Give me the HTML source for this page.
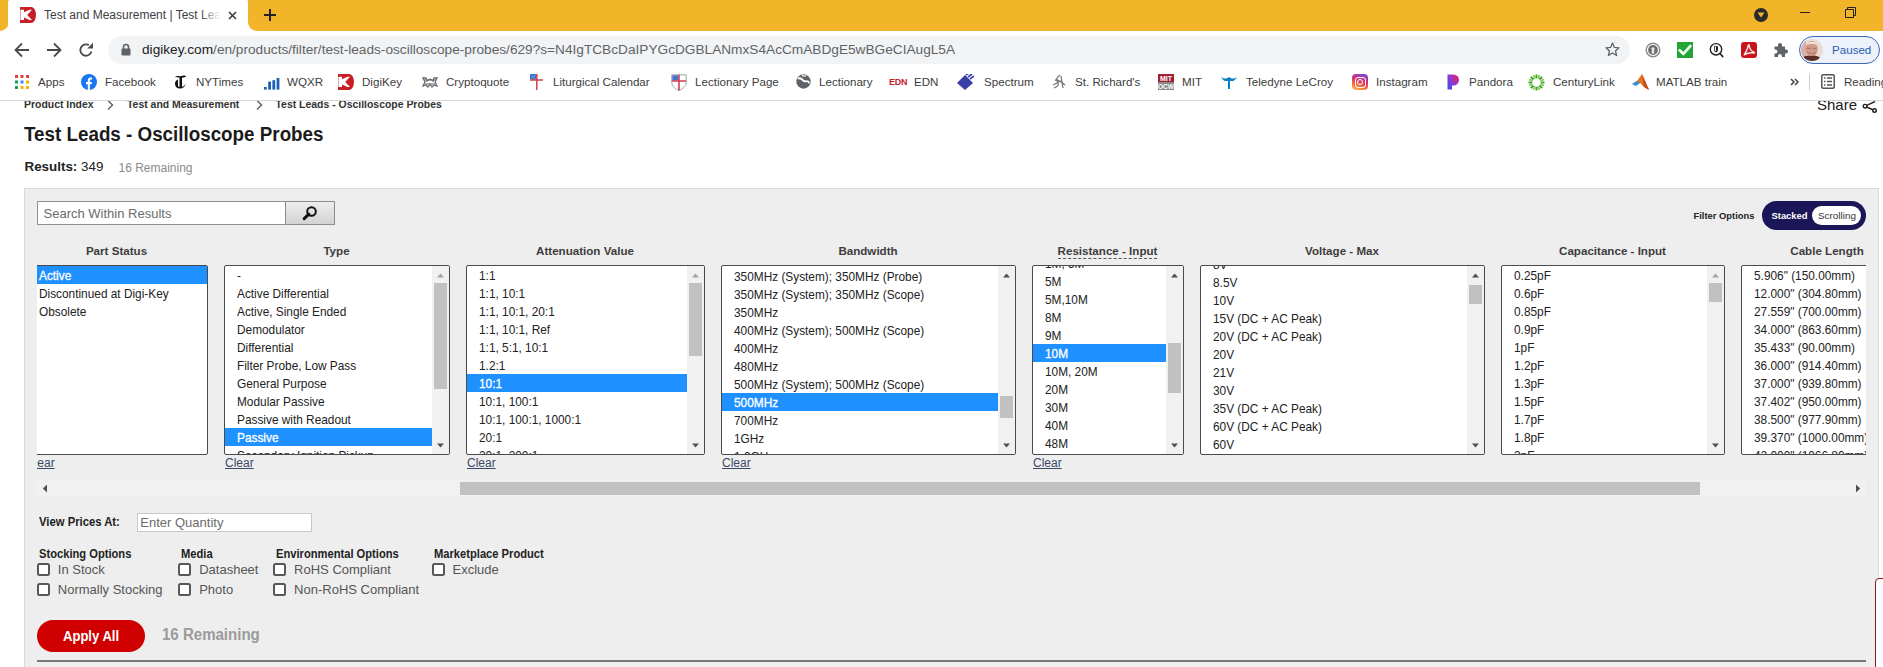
<!DOCTYPE html>
<html><head><meta charset="utf-8">
<style>
*{margin:0;padding:0;box-sizing:border-box}
html,body{width:1883px;height:667px;overflow:hidden;background:#fff;font-family:"Liberation Sans",sans-serif;position:relative}
.a{position:absolute}
.t{position:absolute;white-space:nowrap;line-height:1}
#tabbar{left:0;top:0;width:1883px;height:31px;background:#F2B52A}
#toolbar{left:0;top:31px;width:1883px;height:35px;background:#fff}
#bm{left:0;top:66px;width:1883px;height:34px;background:#fff}
#sep{left:0;top:100px;width:1883px;height:1px;background:#d6d6d6}
.bmt{font-size:11.6px;color:#3c3c3c;top:76px}
#page{left:0;top:101px;width:1883px;height:566px;overflow:hidden;background:#fff}
</style></head><body>
<!-- TAB BAR -->
<div id="tabbar" class="a"></div>
<div class="a" style="left:0;top:22px;width:258px;height:9px;background:#fff"></div>
<div class="a" style="left:0;top:0;width:9px;height:31px;background:#F2B52A;border-bottom-right-radius:9px"></div>
<div class="a" style="left:8px;top:0;width:241px;height:31px;background:#fff;border-top-left-radius:2px;border-top-right-radius:3px"></div>
<div class="a" style="left:248px;top:0;width:10px;height:31px;background:#F2B52A;border-bottom-left-radius:9px"></div>
<!-- favicon K -->
<svg class="a" style="left:20px;top:7px" width="16" height="16" viewBox="0 0 16 16"><path d="M0 0H11A5 8 0 0 1 11 16H0Z" fill="#C81E28"/><path d="M0.4 2.8H4V5.2L9.4 2.8H12L7.2 7.9L12 13H9.4L4 10.6V13H0.4Z" fill="#fff"/></svg>
<div class="t" style="left:44px;top:9px;font-size:12px;color:#3c4043;width:178px;overflow:hidden;height:14px">Test and Measurement | Test Leads - Oscilloscope Probes</div>
<div class="a" style="left:200px;top:6px;width:24px;height:18px;background:linear-gradient(to right,rgba(255,255,255,0),#fff 85%)"></div>
<svg class="a" style="left:228px;top:11px" width="9" height="9" viewBox="0 0 9 9"><path d="M1 1L8 8M8 1L1 8" stroke="#3c3c3c" stroke-width="1.6"/></svg>
<svg class="a" style="left:263px;top:8px" width="14" height="14" viewBox="0 0 14 14"><path d="M7 1V13M1 7H13" stroke="#222" stroke-width="2"/></svg>
<!-- window controls -->
<div class="a" style="left:1754px;top:8px;width:14px;height:14px;border-radius:50%;background:#2a2a2a"></div>
<svg class="a" style="left:1757px;top:12px" width="8" height="6" viewBox="0 0 8 6"><path d="M0.5 0.5H7.5L4 5.5Z" fill="#F2B52A"/></svg>
<div class="a" style="left:1800px;top:12px;width:10px;height:1px;background:#222"></div>
<svg class="a" style="left:1845px;top:7px" width="11" height="11" viewBox="0 0 11 11"><path d="M0.5 2.5H8.5V10.5H0.5Z M2.5 2.5V0.5H10.5V8.5H8.5" fill="none" stroke="#222" stroke-width="1"/></svg>

<!-- TOOLBAR -->
<div id="toolbar" class="a"></div>
<svg class="a" style="left:14px;top:42px" width="16" height="16" viewBox="0 0 16 16"><path d="M15 8H2M8 1.5L1.5 8L8 14.5" fill="none" stroke="#4a4a4a" stroke-width="1.8"/></svg>
<svg class="a" style="left:46px;top:42px" width="16" height="16" viewBox="0 0 16 16"><path d="M1 8H14M8 1.5L14.5 8L8 14.5" fill="none" stroke="#4a4a4a" stroke-width="1.8"/></svg>
<svg class="a" style="left:78px;top:42px" width="16" height="16" viewBox="0 0 16 16"><path d="M13.5 9.5A5.7 5.7 0 1 1 10.9 3.1" fill="none" stroke="#4a4a4a" stroke-width="1.8"/><path d="M15 0.8V6.6H9.2Z" fill="#4a4a4a"/></svg>
<div class="a" style="left:108px;top:36px;width:1522px;height:28px;border-radius:14px;background:#F1F3F4"></div>
<svg class="a" style="left:121px;top:43px" width="10" height="13" viewBox="0 0 10 13"><path d="M2.5 6V4A2.5 2.5 0 0 1 7.5 4V6" fill="none" stroke="#5f6368" stroke-width="1.6"/><rect x="0.5" y="5.5" width="9" height="7" rx="1" fill="#5f6368"/></svg>
<div class="t" style="left:142px;top:43px;font-size:13.66px;color:#5f6368"><span style="color:#202124">digikey.com</span>/en/products/filter/test-leads-oscilloscope-probes/629?s=N4IgTCBcDaIPYGcDGBLANmxS4AcCmABDgE5wBGeCIAugL5A</div>
<svg class="a" style="left:1605px;top:42px" width="15" height="15" viewBox="0 0 15 15"><path d="M7.5 1L9.4 5.4L14 5.8L10.5 8.9L11.6 13.5L7.5 11L3.4 13.5L4.5 8.9L1 5.8L5.6 5.4Z" fill="none" stroke="#5f6368" stroke-width="1.3" stroke-linejoin="round"/></svg>
<!-- extension icons -->
<svg class="a" style="left:1645px;top:42px" width="16" height="16" viewBox="0 0 16 16"><circle cx="8" cy="8" r="6.8" fill="none" stroke="#8c8c8c" stroke-width="1.4"/><circle cx="8" cy="8" r="4.9" fill="#6e6e6e"/><circle cx="8" cy="6.8" r="1.6" fill="#e8e8e8"/><path d="M7 7.5H9L9.4 11.5H6.6Z" fill="#e8e8e8"/></svg>
<div class="a" style="left:1677px;top:42px;width:16px;height:16px;background:#23A437"></div>
<svg class="a" style="left:1677px;top:42px" width="16" height="16" viewBox="0 0 16 16"><path d="M2.6 8.2L6.3 11.8L13.4 4" fill="none" stroke="#f4fff4" stroke-width="2.6" stroke-linecap="round"/></svg>
<svg class="a" style="left:1708px;top:42px" width="17" height="17" viewBox="0 0 17 17"><circle cx="8" cy="7.3" r="5.7" fill="none" stroke="#222" stroke-width="1.4"/><path d="M12 11.5L14.8 14.6" stroke="#222" stroke-width="1.6" stroke-linecap="round"/><path d="M6 4.3H10V7.2C10 8.8 9.2 9.8 8 10.6C6.8 9.8 6 8.8 6 7.2Z" fill="#222"/><path d="M6.8 5H8V9.6C7.2 9 6.8 8.2 6.8 7.2Z" fill="#fff"/></svg>
<div class="a" style="left:1741px;top:42px;width:16px;height:16px;border-radius:3px;background:#C8141B"></div>
<svg class="a" style="left:1741px;top:42px" width="16" height="16" viewBox="0 0 16 16"><path d="M3.2 12.8C4.5 11 6.5 7 7.3 3.5C7.6 2.5 8.3 2.6 8.3 3.5C8.2 6.5 10.5 9.5 13 10.2C13.8 10.5 13.5 11.2 12.8 11C9.8 10.4 6 11.2 3.2 12.8Z" fill="none" stroke="#fbe9e9" stroke-width="1.4" stroke-linejoin="round"/></svg>
<svg class="a" style="left:1773px;top:42px" width="16" height="16" viewBox="0 0 16 16"><path d="M1.5 4.5H5V3A2 2 0 0 1 9 3V4.5H12V7.5H13A2 2 0 0 1 13 11.5H12V15H8.8V14A1.9 1.9 0 0 0 5 14V15H1.5V11.5H2.5A2 2 0 0 0 2.5 7.5H1.5Z" fill="#5f6368"/></svg>
<div class="a" style="left:1799px;top:36px;width:81px;height:28px;border-radius:14px;border:1.3px solid #3a68b8;background:#EDF1FA"></div>
<svg class="a" style="left:1801px;top:39px" width="22" height="22" viewBox="0 0 22 22"><defs><clipPath id="av"><circle cx="11" cy="11" r="11"/></clipPath></defs><g clip-path="url(#av)"><rect width="22" height="22" fill="#eadcd6"/><rect x="0" y="0" width="5" height="22" fill="#d9b0a8"/><ellipse cx="10.5" cy="10" rx="6.3" ry="8" fill="#d49a88"/><path d="M4.5 7C5 1.5 16 1.5 16.5 7C15 4 6 4 4.5 7Z" fill="#f0ece8"/><path d="M5.5 9.3H9.5M11.5 9.3H15.5" stroke="#8a6a60" stroke-width="0.8"/><path d="M6 13C8 15 13 15 15 13" stroke="#a86a5a" stroke-width="0.8" fill="none"/><path d="M0 22C1 17 5 16 10 17C15 16 19 17 22 22Z" fill="#5a2e26"/></g></svg>
<div class="t" style="left:1832px;top:44px;font-size:11.6px;color:#2a5db0">Paused</div>

<!-- BOOKMARKS -->
<div id="bm" class="a"></div>

<!-- apps grid -->
<svg class="a" style="left:15px;top:75px" width="14" height="14" viewBox="0 0 14 14">
<rect x="0" y="0" width="3" height="3" fill="#DB4437"/><rect x="5.5" y="0" width="3" height="3" fill="#DB4437"/><rect x="11" y="0" width="3" height="3" fill="#DB4437"/>
<rect x="0" y="5.5" width="3" height="3" fill="#0F9D58"/><rect x="5.5" y="5.5" width="3" height="3" fill="#4285F4"/><rect x="11" y="5.5" width="3" height="3" fill="#F4B400"/>
<rect x="0" y="11" width="3" height="3" fill="#0F9D58"/><rect x="5.5" y="11" width="3" height="3" fill="#F4B400"/><rect x="11" y="11" width="3" height="3" fill="#F4B400"/></svg>
<div class="t bmt" style="left:38px">Apps</div>
<svg class="a" style="left:81px;top:74px" width="16" height="16" viewBox="0 0 16 16"><circle cx="8" cy="8" r="8" fill="#1877F2"/><path d="M8.9 16V10.2H10.7L11 8H8.9V6.7C8.9 6.1 9.1 5.6 10 5.6H11.1V3.7C10.9 3.7 10.2 3.6 9.5 3.6C7.9 3.6 6.8 4.6 6.8 6.4V8H5V10.2H6.8V16Z" fill="#fff"/></svg>
<div class="t bmt" style="left:105px">Facebook</div>
<svg class="a" style="left:174px;top:74px" width="13" height="15" viewBox="0 0 13 15"><path d="M1 3C3 1 5 3 7 2C9 1.5 11 1 12 2.5C11 3.5 9 3.5 8 3.8V13C9 12.5 10.5 11.5 11.5 10C11 12.5 9 14.5 6 14.5C3 14.5 1 12.5 1 9.5C1 7.5 2.5 6 4 5.5V12C4.5 12.7 5 13 5.5 13V3.5C4 3.2 2.5 3.6 1 3Z" fill="#111"/></svg>
<div class="t bmt" style="left:196px">NYTimes</div>
<svg class="a" style="left:264px;top:77px" width="16" height="13" viewBox="0 0 16 13"><rect x="0" y="10" width="2.8" height="2.6" fill="#1a5fb4"/><rect x="4.2" y="4.6" width="2.8" height="8" fill="#1a5fb4"/><rect x="8.4" y="3.2" width="2.8" height="9.4" fill="#1a5fb4"/><rect x="12.6" y="1" width="2.8" height="11.6" fill="#1a5fb4"/></svg>
<div class="t bmt" style="left:287px">WQXR</div>
<svg class="a" style="left:338px;top:74px" width="16" height="16" viewBox="0 0 16 16"><path d="M0 0H11A5 8 0 0 1 11 16H0Z" fill="#C81E28"/><path d="M0.4 2.8H4V5.2L9.4 2.8H12L7.2 7.9L12 13H9.4L4 10.6V13H0.4Z" fill="#fff"/></svg>
<div class="t bmt" style="left:362px">DigiKey</div>
<svg class="a" style="left:422px;top:76px" width="16" height="12" viewBox="0 0 16 12"><path d="M1 2L4 2L5 5L8 3L11 5L12 2L15 2L13 6L15 10L12 9L10 11L8 8L6 11L4 9L1 10L3 6Z" fill="none" stroke="#6a6a6a" stroke-width="1.3"/><path d="M2 4H14M3 8H13" stroke="#6a6a6a" stroke-width="1"/></svg>
<div class="t bmt" style="left:446px">Cryptoquote</div>
<svg class="a" style="left:530px;top:74px" width="14" height="16" viewBox="0 0 14 16"><rect x="0" y="0" width="6.3" height="5.5" fill="#3a6ac8"/><path d="M0.5 0.5L5.8 5M5.8 0.5L0.5 5" stroke="#9ab8f0" stroke-width="0.6"/><path d="M6.8 0V16M0 6H13" stroke="#d0404e" stroke-width="1.5"/></svg>
<div class="t bmt" style="left:553px">Liturgical Calendar</div>
<svg class="a" style="left:671px;top:74px" width="16" height="17" viewBox="0 0 16 17"><path d="M0.8 0.8H15.2V8.5C15.2 12.5 11 15.2 8 16.4C5 15.2 0.8 12.5 0.8 8.5Z" fill="#fff" stroke="#a0a0a0" stroke-width="1"/><rect x="1.3" y="1.3" width="6" height="5.2" fill="#4a72c8"/><path d="M8 0.8V16.4M0.8 7H15.2" stroke="#d0404e" stroke-width="1.6"/></svg>
<div class="t bmt" style="left:695px">Lectionary Page</div>
<svg class="a" style="left:796px;top:74px" width="15" height="15" viewBox="0 0 15 15"><circle cx="7.5" cy="7.5" r="7.2" fill="#5f6368"/><path d="M1.8 4.8C3.5 3.8 5.5 4.6 6.8 6.2C7.8 7.4 9 7.6 10.2 7.2C11.6 6.8 12.8 7.6 13.2 9.2" fill="none" stroke="#fff" stroke-width="1.9"/><path d="M6 1C7 2 9 2.3 10.2 1.5" stroke="#fff" stroke-width="1.2" fill="none"/></svg>
<div class="t bmt" style="left:819px">Lectionary</div>
<div class="t" style="left:889px;top:78px;font-size:9px;font-weight:bold;color:#c8202a;letter-spacing:-0.3px">EDN</div>
<div class="t bmt" style="left:914px">EDN</div>
<svg class="a" style="left:957px;top:74px" width="17" height="16" viewBox="0 0 17 16"><path d="M0 9L8 1L16 9L8 16Z" fill="#3a3fa8"/><path d="M9 1L12 -1M11 3L15 0M13 5L17 2" stroke="#3a3fa8" stroke-width="1.6"/></svg>
<div class="t bmt" style="left:984px">Spectrum</div>
<svg class="a" style="left:1052px;top:74px" width="15" height="16" viewBox="0 0 15 16"><path d="M8 1C5 3 4 6 6 9C7 11 5 13 2 14M3 6C6 6 10 8 13 11M9 2L11 14M1 11L7 8" fill="none" stroke="#777" stroke-width="1.3"/></svg>
<div class="t bmt" style="left:1075px">St. Richard's</div>
<svg class="a" style="left:1158px;top:74px" width="16" height="16" viewBox="0 0 16 16"><rect x="0" y="0" width="16" height="8" fill="#a31f34"/><rect x="0" y="8" width="16" height="8" fill="#8a8a8a"/><text x="8" y="7" font-size="7" font-weight="bold" fill="#fff" text-anchor="middle" font-family="Liberation Sans">MIT</text><text x="8" y="15" font-size="6.5" font-weight="bold" fill="#fff" text-anchor="middle" font-family="Liberation Sans">OCW</text></svg>
<div class="t bmt" style="left:1182px">MIT</div>
<svg class="a" style="left:1221px;top:76px" width="16" height="13" viewBox="0 0 16 13"><path d="M0 1C3 3 5 3 8 1C11 3 13 3 16 1C13 6 11 5 9 5V13H7V5C5 5 3 6 0 1Z" fill="#0a7ec2"/></svg>
<div class="t bmt" style="left:1246px">Teledyne LeCroy</div>
<div class="a" style="left:1352px;top:74px;width:16px;height:16px;border-radius:4px;background:linear-gradient(20deg,#fdc468 0%,#f77737 28%,#e1306c 55%,#a13bb8 80%,#5b51d8 100%)"></div>
<div class="a" style="left:1354.5px;top:76.5px;width:11px;height:11px;border-radius:3px;border:1.5px solid #fff"></div>
<div class="a" style="left:1357px;top:79px;width:6px;height:6px;border-radius:50%;border:1.5px solid #fff"></div>
<div class="t bmt" style="left:1376px">Instagram</div>
<svg class="a" style="left:1447px;top:74px" width="13" height="16" viewBox="0 0 13 16"><defs><linearGradient id="pd" x1="0" y1="1" x2="1" y2="0"><stop offset="0" stop-color="#3b4fd8"/><stop offset="0.5" stop-color="#8a3ad8"/><stop offset="1" stop-color="#f0205a"/></linearGradient></defs><path d="M0.5 0.5H6.5A5.5 5.5 0 0 1 6.5 11.5H5V15.5H0.5Z" fill="url(#pd)"/><path d="M5 4H6.5A2 2 0 0 1 6.5 8H5Z" fill="#d8285f" opacity="0.6"/></svg>
<div class="t bmt" style="left:1469px">Pandora</div>
<svg class="a" style="left:1528px;top:74px" width="17" height="17" viewBox="0 0 17 17"><path d="M12.70 8.50L16.50 8.50" stroke="#3aa03a" stroke-width="1.9"/><path d="M12.38 10.11L15.89 11.56" stroke="#8ad048" stroke-width="1.9"/><path d="M11.47 11.47L14.16 14.16" stroke="#3aa03a" stroke-width="1.9"/><path d="M10.11 12.38L11.56 15.89" stroke="#8ad048" stroke-width="1.9"/><path d="M8.50 12.70L8.50 16.50" stroke="#3aa03a" stroke-width="1.9"/><path d="M6.89 12.38L5.44 15.89" stroke="#8ad048" stroke-width="1.9"/><path d="M5.53 11.47L2.84 14.16" stroke="#3aa03a" stroke-width="1.9"/><path d="M4.62 10.11L1.11 11.56" stroke="#8ad048" stroke-width="1.9"/><path d="M4.30 8.50L0.50 8.50" stroke="#3aa03a" stroke-width="1.9"/><path d="M4.62 6.89L1.11 5.44" stroke="#8ad048" stroke-width="1.9"/><path d="M5.53 5.53L2.84 2.84" stroke="#3aa03a" stroke-width="1.9"/><path d="M6.89 4.62L5.44 1.11" stroke="#8ad048" stroke-width="1.9"/><path d="M8.50 4.30L8.50 0.50" stroke="#3aa03a" stroke-width="1.9"/><path d="M10.11 4.62L11.56 1.11" stroke="#8ad048" stroke-width="1.9"/><path d="M11.47 5.53L14.16 2.84" stroke="#3aa03a" stroke-width="1.9"/><path d="M12.38 6.89L15.89 5.44" stroke="#8ad048" stroke-width="1.9"/></svg>
<div class="t bmt" style="left:1553px">CenturyLink</div>
<svg class="a" style="left:1632px;top:74px" width="17" height="16" viewBox="0 0 17 16"><path d="M0 10L5 7L10 0L17 16L12 13L8 9Z" fill="#e8741e"/><path d="M0 10L5 7L8 9L4 12Z" fill="#2d8ed6"/><path d="M10 0L12 13L17 16Z" fill="#c04a1a"/></svg>
<div class="t bmt" style="left:1656px">MATLAB train</div>
<svg class="a" style="left:1790px;top:78px" width="9" height="8" viewBox="0 0 9 8"><path d="M1 1L4 4L1 7M5 1L8 4L5 7" fill="none" stroke="#444" stroke-width="1.5"/></svg>
<div class="a" style="left:1809px;top:74px;width:1px;height:16px;background:#ccc"></div>
<svg class="a" style="left:1821px;top:74px" width="14" height="15" viewBox="0 0 14 15"><rect x="0.75" y="0.75" width="12.5" height="13.5" rx="1.5" fill="none" stroke="#555" stroke-width="1.5"/><path d="M3 4H4.5M6 4H11M3 7.5H4.5M6 7.5H11M3 11H4.5M6 11H11" stroke="#555" stroke-width="1.3"/></svg>
<div class="t bmt" style="left:1844px">Reading list</div>
<div id="sep" class="a"></div>



<div id="page" class="a"><div class="t" style="left:24px;top:-1.45px;font-size:10.45px;color:#333;font-weight:bold;">Product Index</div>
<div class="t" style="left:127px;top:-1.45px;font-size:10.45px;color:#333;font-weight:bold;">Test and Measurement</div>
<div class="t" style="left:275.5px;top:-1.45px;font-size:10.45px;color:#333;font-weight:bold;">Test Leads - Oscilloscope Probes</div>
<svg class="a" style="left:107px;top:-1px" width="7" height="10" viewBox="0 0 7 10"><path d="M1 0.5L5.5 5L1 9.5" fill="none" stroke="#666" stroke-width="1.5"/></svg>
<svg class="a" style="left:255.5px;top:-1px" width="7" height="10" viewBox="0 0 7 10"><path d="M1 0.5L5.5 5L1 9.5" fill="none" stroke="#666" stroke-width="1.5"/></svg>
<div class="t" style="left:1817px;top:-4.00px;font-size:15px;color:#222;font-weight:normal;">Share</div>
<svg class="a" style="left:1862px;top:-1px" width="15" height="13" viewBox="0 0 15 13"><path d="M13 1.5L3 6.2L12.5 10.5" fill="none" stroke="#222" stroke-width="1.4"/><circle cx="3" cy="6.2" r="1.8" fill="#fff" stroke="#222" stroke-width="1.4"/><circle cx="12.5" cy="10.5" r="1.8" fill="#fff" stroke="#222" stroke-width="1.4"/></svg>
<div class="t" style="left:24px;top:23.07px;font-size:20px;color:#1b1b1b;font-weight:bold;transform:scaleX(0.94);transform-origin:0 0">Test Leads - Oscilloscope Probes</div>
<div class="t" style="left:24.5px;top:59.36px;font-size:13.4px;color:#222;font-weight:normal;"><b>Results:</b> 349</div>
<div class="t" style="left:118.5px;top:60.54px;font-size:12px;color:#8a8a8a;font-weight:normal;">16 Remaining</div>
<div class="a" style="left:24px;top:87px;width:1855px;height:600px;background:#EEEEEE;border:1px solid #d9d9d9"></div>
<div class="a" style="left:37px;top:100px;width:250px;height:24px;background:#fff;border:1px solid #8f8f8f"></div>
<div class="t" style="left:43.5px;top:105.50px;font-size:13px;color:#6b6b6b;font-weight:normal;">Search Within Results</div>
<div class="a" style="left:285px;top:100px;width:50px;height:24px;background:linear-gradient(#ededed,#d3d3d3);border:1px solid #8c8c8c"></div>
<svg class="a" style="left:302px;top:104px" width="16" height="16" viewBox="0 0 16 16"><circle cx="9.5" cy="6.5" r="4.3" fill="none" stroke="#111" stroke-width="2"/><path d="M6.8 9.2L2.2 13.6" stroke="#111" stroke-width="3" stroke-linecap="round"/></svg>
<div class="t" style="left:1693.5px;top:109.64px;font-size:9.4px;color:#222;font-weight:bold;">Filter Options</div>
<div class="a" style="left:1762px;top:100px;width:104px;height:29px;background:#1B1657;border-radius:15px"></div>
<div class="a" style="left:1812px;top:105px;width:49px;height:19px;background:#fff;border-radius:10px"></div>
<div class="t" style="left:1771.5px;top:109.64px;font-size:9.4px;color:#fff;font-weight:bold;">Stacked</div>
<div class="t" style="left:1818px;top:109.92px;font-size:9.9px;color:#333;font-weight:normal;">Scrolling</div>
<div class="a" style="left:37px;top:139px;width:1829px;height:240px;overflow:hidden"><div class="a" style="left:-37px;top:-139px;width:1883px;height:667px">
<div class="t" style="left:-33.5px;width:300px;text-align:center;top:144.18px;font-size:11.6px;color:#3d3d3d;font-weight:bold">Part Status</div>
<div class="a" style="left:26px;top:164px;width:182px;height:190px;background:#fff;border:1px solid #4a4a4a;border-radius:2px;overflow:hidden">
<div class="a" style="left:0;top:0px;width:180px;height:18px;background:#1E90FF"></div>
<div class="t" style="left:12.0px;top:4.97px;font-size:11.85px;color:#fff;-webkit-text-stroke:0.3px #fff">Active</div>
<div class="t" style="left:12.0px;top:22.97px;font-size:11.85px;color:#222;">Discontinued at Digi-Key</div>
<div class="t" style="left:12.0px;top:40.97px;font-size:11.85px;color:#222;">Obsolete</div>
</div>
<div class="t" style="left:26px;top:355.84px;font-size:12px;color:#3b4a66;font-weight:normal;text-decoration:underline">Clear</div>
<div class="t" style="left:186.5px;width:300px;text-align:center;top:144.18px;font-size:11.6px;color:#3d3d3d;font-weight:bold">Type</div>
<div class="a" style="left:224px;top:164px;width:226px;height:190px;background:#fff;border:1px solid #4a4a4a;border-radius:2px;overflow:hidden">
<div class="t" style="left:12.0px;top:4.97px;font-size:11.85px;color:#222;">-</div>
<div class="t" style="left:12.0px;top:22.97px;font-size:11.85px;color:#222;">Active Differential</div>
<div class="t" style="left:12.0px;top:40.97px;font-size:11.85px;color:#222;">Active, Single Ended</div>
<div class="t" style="left:12.0px;top:58.97px;font-size:11.85px;color:#222;">Demodulator</div>
<div class="t" style="left:12.0px;top:76.97px;font-size:11.85px;color:#222;">Differential</div>
<div class="t" style="left:12.0px;top:94.97px;font-size:11.85px;color:#222;">Filter Probe, Low Pass</div>
<div class="t" style="left:12.0px;top:112.97px;font-size:11.85px;color:#222;">General Purpose</div>
<div class="t" style="left:12.0px;top:130.97px;font-size:11.85px;color:#222;">Modular Passive</div>
<div class="t" style="left:12.0px;top:148.97px;font-size:11.85px;color:#222;">Passive with Readout</div>
<div class="a" style="left:0;top:162px;width:207px;height:18px;background:#1E90FF"></div>
<div class="t" style="left:12.0px;top:166.97px;font-size:11.85px;color:#fff;-webkit-text-stroke:0.3px #fff">Passive</div>
<div class="t" style="left:12.0px;top:184.97px;font-size:11.85px;color:#222;">Secondary Ignition Pickup</div>
<div class="a" style="left:207px;top:0;width:17px;height:188px;background:#F1F1F1"></div>
<div class="a" style="left:209px;top:17px;width:13px;height:106px;background:#C1C1C1"></div>
<svg class="a" style="left:211px;top:7px" width="9" height="5" viewBox="0 0 9 5"><path d="M1 4.5H8L4.5 0.5Z" fill="#A3A3A3"/></svg>
<svg class="a" style="left:211px;top:177px" width="9" height="5" viewBox="0 0 9 5"><path d="M1 0.5H8L4.5 4.5Z" fill="#505050"/></svg>
</div>
<div class="t" style="left:225px;top:355.84px;font-size:12px;color:#3b4a66;font-weight:normal;text-decoration:underline">Clear</div>
<div class="t" style="left:435.0px;width:300px;text-align:center;top:144.18px;font-size:11.6px;color:#3d3d3d;font-weight:bold">Attenuation Value</div>
<div class="a" style="left:466px;top:164px;width:239px;height:190px;background:#fff;border:1px solid #4a4a4a;border-radius:2px;overflow:hidden">
<div class="t" style="left:12.0px;top:4.97px;font-size:11.85px;color:#222;">1:1</div>
<div class="t" style="left:12.0px;top:22.97px;font-size:11.85px;color:#222;">1:1, 10:1</div>
<div class="t" style="left:12.0px;top:40.97px;font-size:11.85px;color:#222;">1:1, 10:1, 20:1</div>
<div class="t" style="left:12.0px;top:58.97px;font-size:11.85px;color:#222;">1:1, 10:1, Ref</div>
<div class="t" style="left:12.0px;top:76.97px;font-size:11.85px;color:#222;">1:1, 5:1, 10:1</div>
<div class="t" style="left:12.0px;top:94.97px;font-size:11.85px;color:#222;">1.2:1</div>
<div class="a" style="left:0;top:108px;width:220px;height:18px;background:#1E90FF"></div>
<div class="t" style="left:12.0px;top:112.97px;font-size:11.85px;color:#fff;-webkit-text-stroke:0.3px #fff">10:1</div>
<div class="t" style="left:12.0px;top:130.97px;font-size:11.85px;color:#222;">10:1, 100:1</div>
<div class="t" style="left:12.0px;top:148.97px;font-size:11.85px;color:#222;">10:1, 100:1, 1000:1</div>
<div class="t" style="left:12.0px;top:166.97px;font-size:11.85px;color:#222;">20:1</div>
<div class="t" style="left:12.0px;top:184.97px;font-size:11.85px;color:#222;">20:1, 200:1</div>
<div class="a" style="left:220px;top:0;width:17px;height:188px;background:#F1F1F1"></div>
<div class="a" style="left:222px;top:17px;width:13px;height:73px;background:#C1C1C1"></div>
<svg class="a" style="left:224px;top:7px" width="9" height="5" viewBox="0 0 9 5"><path d="M1 4.5H8L4.5 0.5Z" fill="#A3A3A3"/></svg>
<svg class="a" style="left:224px;top:177px" width="9" height="5" viewBox="0 0 9 5"><path d="M1 0.5H8L4.5 4.5Z" fill="#505050"/></svg>
</div>
<div class="t" style="left:467px;top:355.84px;font-size:12px;color:#3b4a66;font-weight:normal;text-decoration:underline">Clear</div>
<div class="t" style="left:718.0px;width:300px;text-align:center;top:144.18px;font-size:11.6px;color:#3d3d3d;font-weight:bold">Bandwidth</div>
<div class="a" style="left:721px;top:164px;width:295px;height:190px;background:#fff;border:1px solid #4a4a4a;border-radius:2px;overflow:hidden">
<div class="t" style="left:12.0px;top:5.97px;font-size:11.85px;color:#222;">350MHz (System); 350MHz (Probe)</div>
<div class="t" style="left:12.0px;top:23.97px;font-size:11.85px;color:#222;">350MHz (System); 350MHz (Scope)</div>
<div class="t" style="left:12.0px;top:41.97px;font-size:11.85px;color:#222;">350MHz</div>
<div class="t" style="left:12.0px;top:59.97px;font-size:11.85px;color:#222;">400MHz (System); 500MHz (Scope)</div>
<div class="t" style="left:12.0px;top:77.97px;font-size:11.85px;color:#222;">400MHz</div>
<div class="t" style="left:12.0px;top:95.97px;font-size:11.85px;color:#222;">480MHz</div>
<div class="t" style="left:12.0px;top:113.97px;font-size:11.85px;color:#222;">500MHz (System); 500MHz (Scope)</div>
<div class="a" style="left:0;top:127px;width:276px;height:18px;background:#1E90FF"></div>
<div class="t" style="left:12.0px;top:131.97px;font-size:11.85px;color:#fff;-webkit-text-stroke:0.3px #fff">500MHz</div>
<div class="t" style="left:12.0px;top:149.97px;font-size:11.85px;color:#222;">700MHz</div>
<div class="t" style="left:12.0px;top:167.97px;font-size:11.85px;color:#222;">1GHz</div>
<div class="t" style="left:12.0px;top:185.97px;font-size:11.85px;color:#222;">1.2GHz</div>
<div class="a" style="left:276px;top:0;width:17px;height:188px;background:#F1F1F1"></div>
<div class="a" style="left:278px;top:130px;width:13px;height:22px;background:#C1C1C1"></div>
<svg class="a" style="left:280px;top:7px" width="9" height="5" viewBox="0 0 9 5"><path d="M1 4.5H8L4.5 0.5Z" fill="#505050"/></svg>
<svg class="a" style="left:280px;top:177px" width="9" height="5" viewBox="0 0 9 5"><path d="M1 0.5H8L4.5 4.5Z" fill="#505050"/></svg>
</div>
<div class="t" style="left:722px;top:355.84px;font-size:12px;color:#3b4a66;font-weight:normal;text-decoration:underline">Clear</div>
<div class="t" style="left:957.5px;width:300px;text-align:center;top:144.18px;font-size:11.6px;color:#3d3d3d;font-weight:bold"><span style="border-bottom:1px dashed #555;padding-bottom:1px">Resistance - Input</span></div>
<div class="a" style="left:1032px;top:164px;width:152px;height:190px;background:#fff;border:1px solid #4a4a4a;border-radius:2px;overflow:hidden">
<div class="t" style="left:12.0px;top:-7.03px;font-size:11.85px;color:#222;">1M, 5M</div>
<div class="t" style="left:12.0px;top:10.97px;font-size:11.85px;color:#222;">5M</div>
<div class="t" style="left:12.0px;top:28.97px;font-size:11.85px;color:#222;">5M,10M</div>
<div class="t" style="left:12.0px;top:46.97px;font-size:11.85px;color:#222;">8M</div>
<div class="t" style="left:12.0px;top:64.97px;font-size:11.85px;color:#222;">9M</div>
<div class="a" style="left:0;top:78px;width:133px;height:18px;background:#1E90FF"></div>
<div class="t" style="left:12.0px;top:82.97px;font-size:11.85px;color:#fff;-webkit-text-stroke:0.3px #fff">10M</div>
<div class="t" style="left:12.0px;top:100.97px;font-size:11.85px;color:#222;">10M, 20M</div>
<div class="t" style="left:12.0px;top:118.97px;font-size:11.85px;color:#222;">20M</div>
<div class="t" style="left:12.0px;top:136.97px;font-size:11.85px;color:#222;">30M</div>
<div class="t" style="left:12.0px;top:154.97px;font-size:11.85px;color:#222;">40M</div>
<div class="t" style="left:12.0px;top:172.97px;font-size:11.85px;color:#222;">48M</div>
<div class="t" style="left:12.0px;top:190.97px;font-size:11.85px;color:#222;">50M</div>
<div class="a" style="left:133px;top:0;width:17px;height:188px;background:#F1F1F1"></div>
<div class="a" style="left:135px;top:77px;width:13px;height:50px;background:#C1C1C1"></div>
<svg class="a" style="left:137px;top:7px" width="9" height="5" viewBox="0 0 9 5"><path d="M1 4.5H8L4.5 0.5Z" fill="#505050"/></svg>
<svg class="a" style="left:137px;top:177px" width="9" height="5" viewBox="0 0 9 5"><path d="M1 0.5H8L4.5 4.5Z" fill="#505050"/></svg>
</div>
<div class="t" style="left:1033px;top:355.84px;font-size:12px;color:#3b4a66;font-weight:normal;text-decoration:underline">Clear</div>
<div class="t" style="left:1192.0px;width:300px;text-align:center;top:144.18px;font-size:11.6px;color:#3d3d3d;font-weight:bold">Voltage - Max</div>
<div class="a" style="left:1200px;top:164px;width:285px;height:190px;background:#fff;border:1px solid #4a4a4a;border-radius:2px;overflow:hidden">
<div class="t" style="left:12.0px;top:-6.03px;font-size:11.85px;color:#222;">8V</div>
<div class="t" style="left:12.0px;top:11.97px;font-size:11.85px;color:#222;">8.5V</div>
<div class="t" style="left:12.0px;top:29.97px;font-size:11.85px;color:#222;">10V</div>
<div class="t" style="left:12.0px;top:47.97px;font-size:11.85px;color:#222;">15V (DC + AC Peak)</div>
<div class="t" style="left:12.0px;top:65.97px;font-size:11.85px;color:#222;">20V (DC + AC Peak)</div>
<div class="t" style="left:12.0px;top:83.97px;font-size:11.85px;color:#222;">20V</div>
<div class="t" style="left:12.0px;top:101.97px;font-size:11.85px;color:#222;">21V</div>
<div class="t" style="left:12.0px;top:119.97px;font-size:11.85px;color:#222;">30V</div>
<div class="t" style="left:12.0px;top:137.97px;font-size:11.85px;color:#222;">35V (DC + AC Peak)</div>
<div class="t" style="left:12.0px;top:155.97px;font-size:11.85px;color:#222;">60V (DC + AC Peak)</div>
<div class="t" style="left:12.0px;top:173.97px;font-size:11.85px;color:#222;">60V</div>
<div class="t" style="left:12.0px;top:191.97px;font-size:11.85px;color:#222;">100V</div>
<div class="a" style="left:266px;top:0;width:17px;height:188px;background:#F1F1F1"></div>
<div class="a" style="left:268px;top:19px;width:13px;height:19px;background:#C1C1C1"></div>
<svg class="a" style="left:270px;top:7px" width="9" height="5" viewBox="0 0 9 5"><path d="M1 4.5H8L4.5 0.5Z" fill="#505050"/></svg>
<svg class="a" style="left:270px;top:177px" width="9" height="5" viewBox="0 0 9 5"><path d="M1 0.5H8L4.5 4.5Z" fill="#505050"/></svg>
</div>
<div class="t" style="left:1462.5px;width:300px;text-align:center;top:144.18px;font-size:11.6px;color:#3d3d3d;font-weight:bold">Capacitance - Input</div>
<div class="a" style="left:1501px;top:164px;width:224px;height:190px;background:#fff;border:1px solid #4a4a4a;border-radius:2px;overflow:hidden">
<div class="t" style="left:12.0px;top:4.97px;font-size:11.85px;color:#222;">0.25pF</div>
<div class="t" style="left:12.0px;top:22.97px;font-size:11.85px;color:#222;">0.6pF</div>
<div class="t" style="left:12.0px;top:40.97px;font-size:11.85px;color:#222;">0.85pF</div>
<div class="t" style="left:12.0px;top:58.97px;font-size:11.85px;color:#222;">0.9pF</div>
<div class="t" style="left:12.0px;top:76.97px;font-size:11.85px;color:#222;">1pF</div>
<div class="t" style="left:12.0px;top:94.97px;font-size:11.85px;color:#222;">1.2pF</div>
<div class="t" style="left:12.0px;top:112.97px;font-size:11.85px;color:#222;">1.3pF</div>
<div class="t" style="left:12.0px;top:130.97px;font-size:11.85px;color:#222;">1.5pF</div>
<div class="t" style="left:12.0px;top:148.97px;font-size:11.85px;color:#222;">1.7pF</div>
<div class="t" style="left:12.0px;top:166.97px;font-size:11.85px;color:#222;">1.8pF</div>
<div class="t" style="left:12.0px;top:184.97px;font-size:11.85px;color:#222;">2pF</div>
<div class="a" style="left:205px;top:0;width:17px;height:188px;background:#F1F1F1"></div>
<div class="a" style="left:207px;top:17px;width:13px;height:19px;background:#C1C1C1"></div>
<svg class="a" style="left:209px;top:7px" width="9" height="5" viewBox="0 0 9 5"><path d="M1 4.5H8L4.5 0.5Z" fill="#A3A3A3"/></svg>
<svg class="a" style="left:209px;top:177px" width="9" height="5" viewBox="0 0 9 5"><path d="M1 0.5H8L4.5 4.5Z" fill="#505050"/></svg>
</div>
<div class="t" style="left:1677.0px;width:300px;text-align:center;top:144.18px;font-size:11.6px;color:#3d3d3d;font-weight:bold">Cable Length</div>
<div class="a" style="left:1741px;top:164px;width:173px;height:190px;background:#fff;border:1px solid #4a4a4a;border-radius:2px;overflow:hidden">
<div class="t" style="left:12.0px;top:4.97px;font-size:11.85px;color:#222;">5.906&quot; (150.00mm)</div>
<div class="t" style="left:12.0px;top:22.97px;font-size:11.85px;color:#222;">12.000&quot; (304.80mm)</div>
<div class="t" style="left:12.0px;top:40.97px;font-size:11.85px;color:#222;">27.559&quot; (700.00mm)</div>
<div class="t" style="left:12.0px;top:58.97px;font-size:11.85px;color:#222;">34.000&quot; (863.60mm)</div>
<div class="t" style="left:12.0px;top:76.97px;font-size:11.85px;color:#222;">35.433&quot; (90.00mm)</div>
<div class="t" style="left:12.0px;top:94.97px;font-size:11.85px;color:#222;">36.000&quot; (914.40mm)</div>
<div class="t" style="left:12.0px;top:112.97px;font-size:11.85px;color:#222;">37.000&quot; (939.80mm)</div>
<div class="t" style="left:12.0px;top:130.97px;font-size:11.85px;color:#222;">37.402&quot; (950.00mm)</div>
<div class="t" style="left:12.0px;top:148.97px;font-size:11.85px;color:#222;">38.500&quot; (977.90mm)</div>
<div class="t" style="left:12.0px;top:166.97px;font-size:11.85px;color:#222;">39.370&quot; (1000.00mm)</div>
<div class="t" style="left:12.0px;top:184.97px;font-size:11.85px;color:#222;">42.000&quot; (1066.80mm)</div>
</div>
</div></div>
<div class="a" style="left:37px;top:379px;width:1829px;height:17px;background:#F1F1F1"></div>
<div class="a" style="left:460px;top:381px;width:1240px;height:13px;background:#C1C1C1"></div>
<svg class="a" style="left:42px;top:383px" width="6" height="9" viewBox="0 0 6 9"><path d="M5 0.5V8.5L0.8 4.5Z" fill="#505050"/></svg>
<svg class="a" style="left:1855px;top:383px" width="6" height="9" viewBox="0 0 6 9"><path d="M1 0.5V8.5L5.2 4.5Z" fill="#505050"/></svg>
<div class="t" style="left:39.3px;top:415.34px;font-size:12px;color:#222;font-weight:bold;transform:scaleX(0.94);transform-origin:0 0">View Prices At:</div>
<div class="a" style="left:137px;top:412px;width:175px;height:19px;background:#fff;border:1px solid #c8c8c8"></div>
<div class="t" style="left:140.3px;top:415.00px;font-size:13px;color:#6b6b6b;font-weight:normal;">Enter Quantity</div>
<div class="t" style="left:39.3px;top:447.14px;font-size:12px;color:#222;font-weight:bold;transform:scaleX(0.93);transform-origin:0 0">Stocking Options</div>
<div class="a" style="left:37px;top:462px;width:13px;height:13px;border:2px solid #585858;border-radius:2.5px;background:#fff"></div>
<div class="t" style="left:57.8px;top:462.00px;font-size:13px;color:#555;font-weight:normal;">In Stock</div>
<div class="a" style="left:37px;top:482px;width:13px;height:13px;border:2px solid #585858;border-radius:2.5px;background:#fff"></div>
<div class="t" style="left:57.8px;top:482.00px;font-size:13px;color:#555;font-weight:normal;">Normally Stocking</div>
<div class="t" style="left:180.7px;top:447.14px;font-size:12px;color:#222;font-weight:bold;transform:scaleX(0.93);transform-origin:0 0">Media</div>
<div class="a" style="left:178px;top:462px;width:13px;height:13px;border:2px solid #585858;border-radius:2.5px;background:#fff"></div>
<div class="t" style="left:199.2px;top:462.00px;font-size:13px;color:#555;font-weight:normal;">Datasheet</div>
<div class="a" style="left:178px;top:482px;width:13px;height:13px;border:2px solid #585858;border-radius:2.5px;background:#fff"></div>
<div class="t" style="left:199.2px;top:482.00px;font-size:13px;color:#555;font-weight:normal;">Photo</div>
<div class="t" style="left:275.6px;top:447.14px;font-size:12px;color:#222;font-weight:bold;transform:scaleX(0.93);transform-origin:0 0">Environmental Options</div>
<div class="a" style="left:273px;top:462px;width:13px;height:13px;border:2px solid #585858;border-radius:2.5px;background:#fff"></div>
<div class="t" style="left:294.1px;top:462.00px;font-size:13px;color:#555;font-weight:normal;">RoHS Compliant</div>
<div class="a" style="left:273px;top:482px;width:13px;height:13px;border:2px solid #585858;border-radius:2.5px;background:#fff"></div>
<div class="t" style="left:294.1px;top:482.00px;font-size:13px;color:#555;font-weight:normal;">Non-RoHS Compliant</div>
<div class="t" style="left:434px;top:447.14px;font-size:12px;color:#222;font-weight:bold;transform:scaleX(0.93);transform-origin:0 0">Marketplace Product</div>
<div class="a" style="left:432px;top:462px;width:13px;height:13px;border:2px solid #585858;border-radius:2.5px;background:#fff"></div>
<div class="t" style="left:452.5px;top:462.00px;font-size:13px;color:#555;font-weight:normal;">Exclude</div>
<div class="a" style="left:37px;top:519px;width:108px;height:32px;background:#D10000;border-radius:16px"></div>
<div class="t" style="left:62.8px;top:526.50px;font-size:15px;color:#fff;font-weight:bold;transform:scaleX(0.87);transform-origin:0 0">Apply All</div>
<div class="t" style="left:161.9px;top:525.66px;font-size:16px;color:#9a9a9a;font-weight:bold;transform:scaleX(0.94);transform-origin:0 0">16 Remaining</div>
<div class="a" style="left:37px;top:559px;width:1829px;height:2px;background:#777"></div>
<div class="a" style="left:1875px;top:477px;width:20px;height:120px;border:1.5px solid #8b1a1a;border-radius:4px 0 0 0;background:#fff"></div></div>
</body></html>
